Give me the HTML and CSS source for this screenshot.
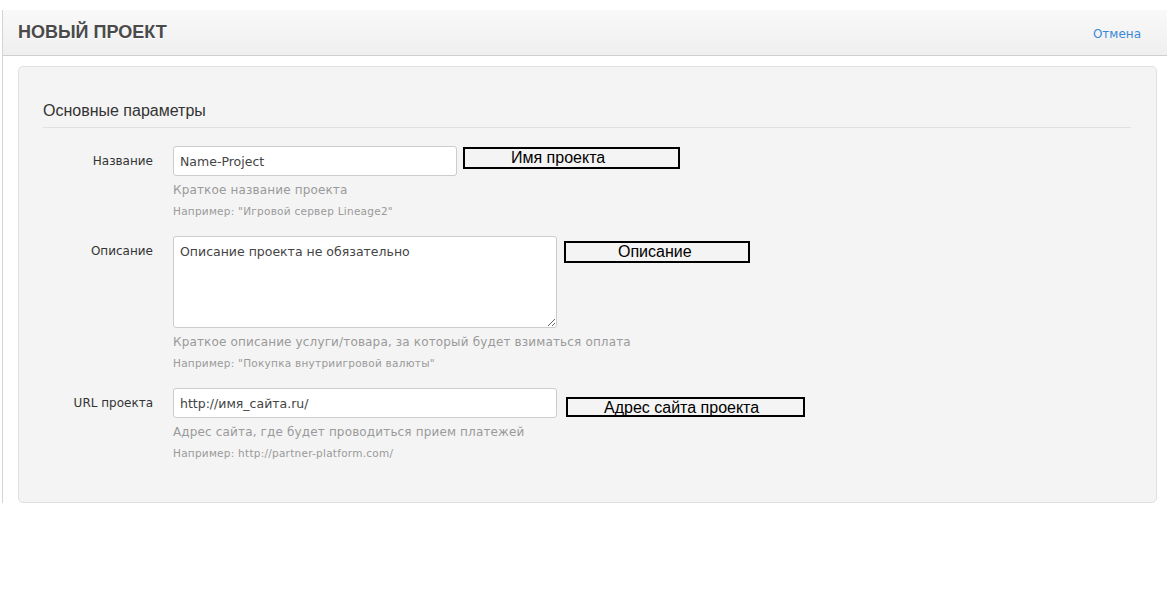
FILE: index.html
```html
<!DOCTYPE html>
<html lang="ru">
<head>
    <meta charset="UTF-8">
    <title>Новый проект</title>
    <link rel="stylesheet" href="styles.css">
</head>
<body>
    <div class="page">
        <!-- Header -->
        <div class="page-header">
            <h1 class="page-title">НОВЫЙ ПРОЕКТ</h1>
            <a href="#" class="cancel-link">Отмена</a>
        </div>

        <!-- Project form -->
        <form class="project-card">
            <div class="legend">Основные параметры</div>

            <div class="form-row">
                <label class="form-label" for="name">Название</label>
                <div class="form-controls">
                    <div class="control-line">
                        <input type="text" id="name" class="field field-short" value="Name-Project">
                        <div class="note note-name">Имя проекта</div>
                    </div>
                    <div class="help">Краткое название проекта</div>
                    <div class="example">Например: "Игровой сервер Lineage2"</div>
                </div>
            </div>

            <div class="form-row">
                <label class="form-label" for="desc">Описание</label>
                <div class="form-controls">
                    <div class="control-line">
                        <textarea id="desc" class="field field-area">Описание проекта не обязательно</textarea>
                        <div class="note note-desc">Описание</div>
                    </div>
                    <div class="help">Краткое описание услуги/товара, за который будет взиматься оплата</div>
                    <div class="example">Например: "Покупка внутриигровой валюты"</div>
                </div>
            </div>

            <div class="form-row">
                <label class="form-label" for="url">URL проекта</label>
                <div class="form-controls">
                    <div class="control-line">
                        <input type="text" id="url" class="field field-long" value="http://имя_сайта.ru/">
                        <div class="note note-url">Адрес сайта проекта</div>
                    </div>
                    <div class="help">Адрес сайта, где будет проводиться прием платежей</div>
                    <div class="example">Например: http://partner-platform.com/</div>
                </div>
            </div>
        </form>
    </div>
</body>
</html>
```

FILE: styles.css
```css
/* General page styles */
body {
    margin: 0;
    padding: 0;
    background-color: #ffffff;
    font-family: 'DejaVu Sans', Verdana, sans-serif;
    font-size: 12px;
    color: #333;
}

.page {
    margin: 10px 0 0 2px;
    border-left: 1px solid #d4d4d4;
    padding-bottom: 0;
}

/* Header */
.page-header {
    height: 45px;
    display: flex;
    align-items: center;
    justify-content: space-between;
    padding: 0 26px 0 15px;
    background: linear-gradient(#f9f9f9, #efefef);
    border-bottom: 1px solid #cfcfcf;
}

.page-title {
    margin: 0;
    font-family: 'Liberation Sans', Arial, sans-serif;
    font-size: 18px;
    font-weight: bold;
    color: #4a4a4a;
    text-shadow: 0 1px 0 #fff;
}

.cancel-link {
    font-size: 12px;
    color: #3a8ad8;
    text-decoration: none;
    margin-top: 2px;
}

/* Form card */
.project-card {
    margin: 10px 10px 0 15px;
    padding: 32px 25px 42px 24px;
    background-color: #f4f4f4;
    border: 1px solid #e0e0e0;
    border-radius: 5px;
}

.legend {
    font-family: 'Liberation Sans', Arial, sans-serif;
    font-size: 16px;
    line-height: 24px;
    color: #333;
    padding-bottom: 4px;
    border-bottom: 1px solid #e0e0e0;
    margin-bottom: 18px;
}

.form-row {
    display: flex;
    gap: 20px;
    margin-bottom: 18px;
}

.form-row:last-child {
    margin-bottom: 0;
}

.form-label {
    width: 110px;
    flex-shrink: 0;
    text-align: right;
    padding-top: 6px;
    line-height: 18px;
    color: #333;
}

.control-line {
    display: flex;
    align-items: flex-start;
}

.field {
    box-sizing: border-box;
    background-color: #fff;
    border: 1px solid #ccc;
    border-radius: 3px;
    font-family: 'DejaVu Sans', Verdana, sans-serif;
    font-size: 12.5px;
    color: #444;
    padding: 0 6px;
    margin: 0;
}

.field-short {
    width: 284px;
    height: 30px;
}

.field-long {
    width: 384px;
    height: 30px;
}

.field-area {
    width: 384px;
    height: 92px;
    padding-top: 6px;
    line-height: 17px;
    resize: vertical;
}

.help {
    margin-top: 6px;
    line-height: 16px;
    color: #9a9a9a;
    font-size: 12px;
    letter-spacing: 0.15px;
}

.example {
    margin-top: 6px;
    line-height: 14px;
    color: #9a9a9a;
    font-size: 10.5px;
    letter-spacing: 0.25px;
}

/* Annotation boxes */
.note {
    box-sizing: border-box;
    border: 2px solid #000;
    font-family: 'Liberation Sans', Arial, sans-serif;
    font-size: 16px;
    line-height: 18px;
    color: #000;
    background-color: #f4f4f4;
}

.note-name {
    width: 217px;
    height: 22px;
    margin: 1px 0 0 6px;
    padding-left: 46px;
}

.note-desc {
    width: 186px;
    height: 22px;
    margin: 5px 0 0 7px;
    padding-left: 52px;
}

.note-url {
    width: 239px;
    height: 20px;
    margin: 9px 0 0 9px;
    padding-left: 36px;
    line-height: 18px;
}
```
